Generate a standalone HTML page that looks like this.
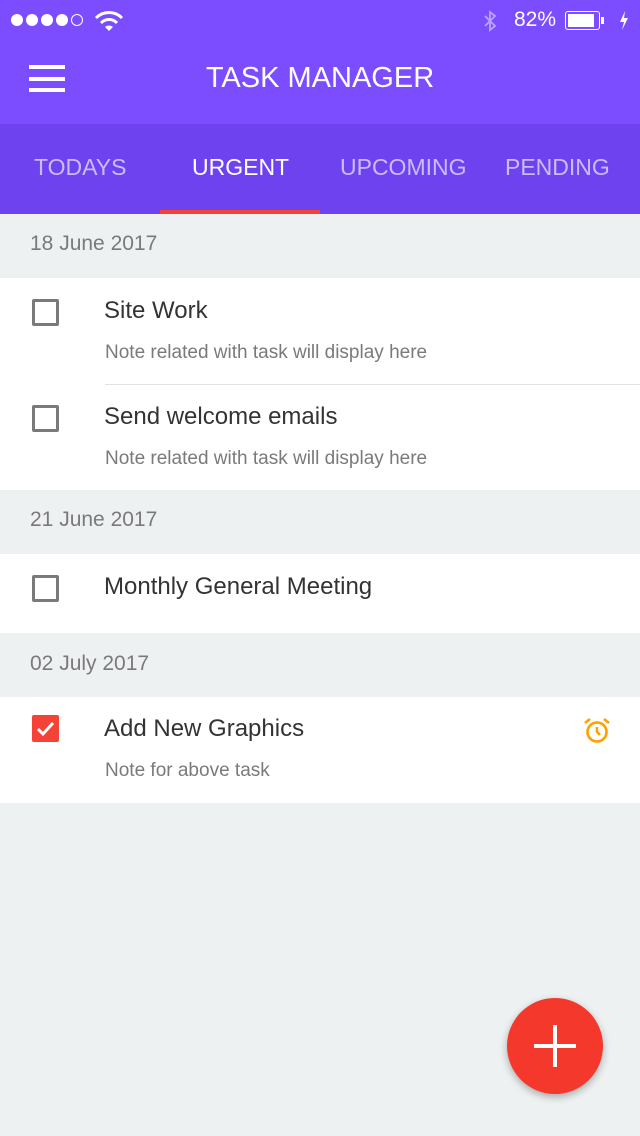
<!DOCTYPE html>
<html><head><meta charset="utf-8"><style>
*{margin:0;padding:0;box-sizing:border-box}
body{width:640px;height:1136px;background:#eef1f2;font-family:"Liberation Sans",sans-serif;position:relative;overflow:hidden}
.abs{position:absolute}
.hdr{left:0;top:0;width:640px;height:124px;background:#7c4dff}
.tabs{left:0;top:124px;width:640px;height:90px;background:#6f42ef}
.tab{top:154px;font-size:23px;color:#cbbcf8;white-space:nowrap}
.date{left:30px;font-size:21px;color:#7a7a7a}
.card{left:0;width:640px;background:#fff}
.cb{left:32px;width:27px;height:27px;border:3px solid #7a7a7a;border-radius:2px}
.t{left:104px;font-size:24px;color:#333;white-space:nowrap}
.n{left:105px;font-size:19px;color:#7a7a7a;white-space:nowrap}
</style></head><body>
<div class="abs hdr"></div>
<!-- status bar -->
<div class="abs" style="left:11px;top:14px;display:flex;gap:3px">
<span style="width:12px;height:12px;border-radius:50%;background:#fff"></span>
<span style="width:12px;height:12px;border-radius:50%;background:#fff"></span>
<span style="width:12px;height:12px;border-radius:50%;background:#fff"></span>
<span style="width:12px;height:12px;border-radius:50%;background:#fff"></span>
<span style="width:12px;height:12px;border-radius:50%;border:1.5px solid #fff"></span>
</div>
<svg class="abs" style="left:94px;top:10px" width="30" height="22" viewBox="0 0 30 22"><path d="M2 8 A18 18 0 0 1 28 8" stroke="#fff" stroke-width="3" fill="none"/><path d="M7 13 A11 11 0 0 1 23 13" stroke="#fff" stroke-width="3" fill="none"/><path d="M11 17 L15 21 L19 17 A6 6 0 0 0 11 17Z" fill="#fff"/></svg>
<svg class="abs" style="left:482px;top:10px" width="16" height="22" viewBox="0 0 16 22"><path d="M3 6 L13 16 L8 20 L8 2 L13 6 L3 16" stroke="#b9a5ff" stroke-width="1.8" fill="none"/></svg>
<div class="abs" style="left:514px;top:8px;font-size:21px;color:#fff">82%</div>
<div class="abs" style="left:565px;top:11px;width:35px;height:19px;border:1.5px solid #fff;border-radius:3px;padding:2px"><div style="width:26px;height:100%;background:#fff"></div></div>
<div class="abs" style="left:601px;top:17px;width:3px;height:7px;background:#fff"></div>
<svg class="abs" style="left:619px;top:11px" width="10" height="19" viewBox="0 0 10 19"><path d="M6 0 L1 11 H5 L3 19 L9 7 H5 Z" fill="#fff"/></svg>
<!-- app bar -->
<div class="abs" style="left:29px;top:65px;width:36px;height:4px;background:#fff"></div>
<div class="abs" style="left:29px;top:77px;width:36px;height:4px;background:#fff"></div>
<div class="abs" style="left:29px;top:88px;width:36px;height:4px;background:#fff"></div>
<div class="abs" style="left:0;width:640px;top:62px;text-align:center;font-size:29px;color:#fff">TASK MANAGER</div>
<div class="abs tabs"></div>
<div class="abs tab" style="left:34px">TODAYS</div>
<div class="abs tab" style="left:192px;color:#fff">URGENT</div>
<div class="abs tab" style="left:340px">UPCOMING</div>
<div class="abs tab" style="left:505px">PENDING</div>
<div class="abs" style="left:160px;top:210px;width:160px;height:4px;background:#f44336"></div>

<div class="abs date" style="top:232px">18 June 2017</div>
<div class="abs card" style="top:278px;height:212px"></div>
<div class="abs cb" style="top:299px"></div>
<div class="abs t" style="top:297px">Site Work</div>
<div class="abs n" style="top:342px">Note related with task will display here</div>
<div class="abs" style="left:105px;top:384px;width:535px;height:1px;background:#e2e2e2"></div>
<div class="abs cb" style="top:405px"></div>
<div class="abs t" style="top:403px">Send welcome emails</div>
<div class="abs n" style="top:448px">Note related with task will display here</div>

<div class="abs date" style="top:508px">21 June 2017</div>
<div class="abs card" style="top:554px;height:79px"></div>
<div class="abs cb" style="top:575px"></div>
<div class="abs t" style="top:573px">Monthly General Meeting</div>

<div class="abs date" style="top:652px">02 July 2017</div>
<div class="abs card" style="top:697px;height:106px"></div>
<div class="abs" style="left:32px;top:715px;width:27px;height:27px;background:#f44336;border-radius:2px"></div>
<svg class="abs" style="left:32px;top:715px" width="27" height="27" viewBox="0 0 27 27"><path d="M6 14 L11 19 L21 8" stroke="#fff" stroke-width="3" fill="none"/></svg>
<div class="abs t" style="top:715px">Add New Graphics</div>
<div class="abs n" style="top:760px">Note for above task</div>
<svg class="abs" style="left:583px;top:717px" width="28" height="28" viewBox="0 0 28 28"><circle cx="14" cy="15" r="9.5" stroke="#ffa000" stroke-width="2.6" fill="none"/><path d="M14 10 V15 L17 18" stroke="#ffa000" stroke-width="2.4" fill="none"/><path d="M2 6 L7 2 M26 6 L21 2" stroke="#ffa000" stroke-width="2.6"/></svg>

<div class="abs" style="left:507px;top:998px;width:96px;height:96px;border-radius:50%;background:#f4392c;box-shadow:0 3px 8px rgba(0,0,0,.3)"></div>
<div class="abs" style="left:534px;top:1044px;width:42px;height:4px;background:#fff"></div>
<div class="abs" style="left:553px;top:1025px;width:4px;height:42px;background:#fff"></div>
</body></html>
